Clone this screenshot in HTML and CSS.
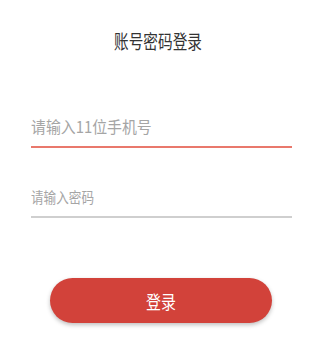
FILE: index.html
```html
<!DOCTYPE html>
<html lang="zh-CN">
<head>
    <meta charset="UTF-8">
    <meta name="viewport" content="width=device-width, initial-scale=1.0">
    <title>账号密码登录</title>
    <link rel="stylesheet" href="styles.css">
</head>
<body>
    <div class="login">
        <h1 class="title"><span>账号密码登录</span></h1>

        <div class="field active">
            <span class="placeholder phone">请输入11位手机号</span>
        </div>

        <div class="field">
            <span class="placeholder pwd">请输入密码</span>
        </div>

        <button class="login-btn"><span>登录</span></button>
    </div>
</body>
</html>
```

FILE: styles.css
```css
* {
    margin: 0;
    padding: 0;
    box-sizing: border-box;
}

body {
    font-family: "Noto Sans CJK SC", "Noto Sans", sans-serif;
    background: #fff;
    width: 320px;
    height: 353px;
    overflow: hidden;
}

.login {
    display: flex;
    flex-direction: column;
    padding-top: 29px;
}

.title {
    text-align: center;
    font-size: 19px;
    font-weight: 400;
    line-height: 24px;
    color: #333;
    margin-right: 3px;
}

.title span {
    display: inline-block;
    transform: scaleX(0.77);
}

.field {
    margin: 0 28px 0 31px;
    border-bottom: 2px solid #cfcfcf;
    display: flex;
    align-items: flex-end;
}

.field.active {
    margin-top: 33px;
    height: 62px;
    padding-bottom: 10px;
    border-bottom-color: #e9786c;
}

.field + .field {
    height: 70px;
    padding-bottom: 9px;
}

.placeholder {
    display: inline-block;
    color: #a5a5a5;
    transform-origin: left center;
    line-height: 20px;
}

.placeholder.phone {
    font-size: 16px;
    transform: scaleX(0.93);
}

.placeholder.pwd {
    font-size: 15px;
    transform: scaleX(0.84);
}

.login-btn {
    align-self: center;
    margin: 60px 0 0 2px;
    width: 222px;
    height: 45px;
    border: none;
    border-radius: 23px;
    background: #d2423a;
    color: #fff;
    font-family: inherit;
    font-size: 18px;
    box-shadow: 0 2px 4px rgba(0, 0, 0, 0.25);
}

.login-btn span {
    display: inline-block;
    transform: scaleX(0.83);
}
```
